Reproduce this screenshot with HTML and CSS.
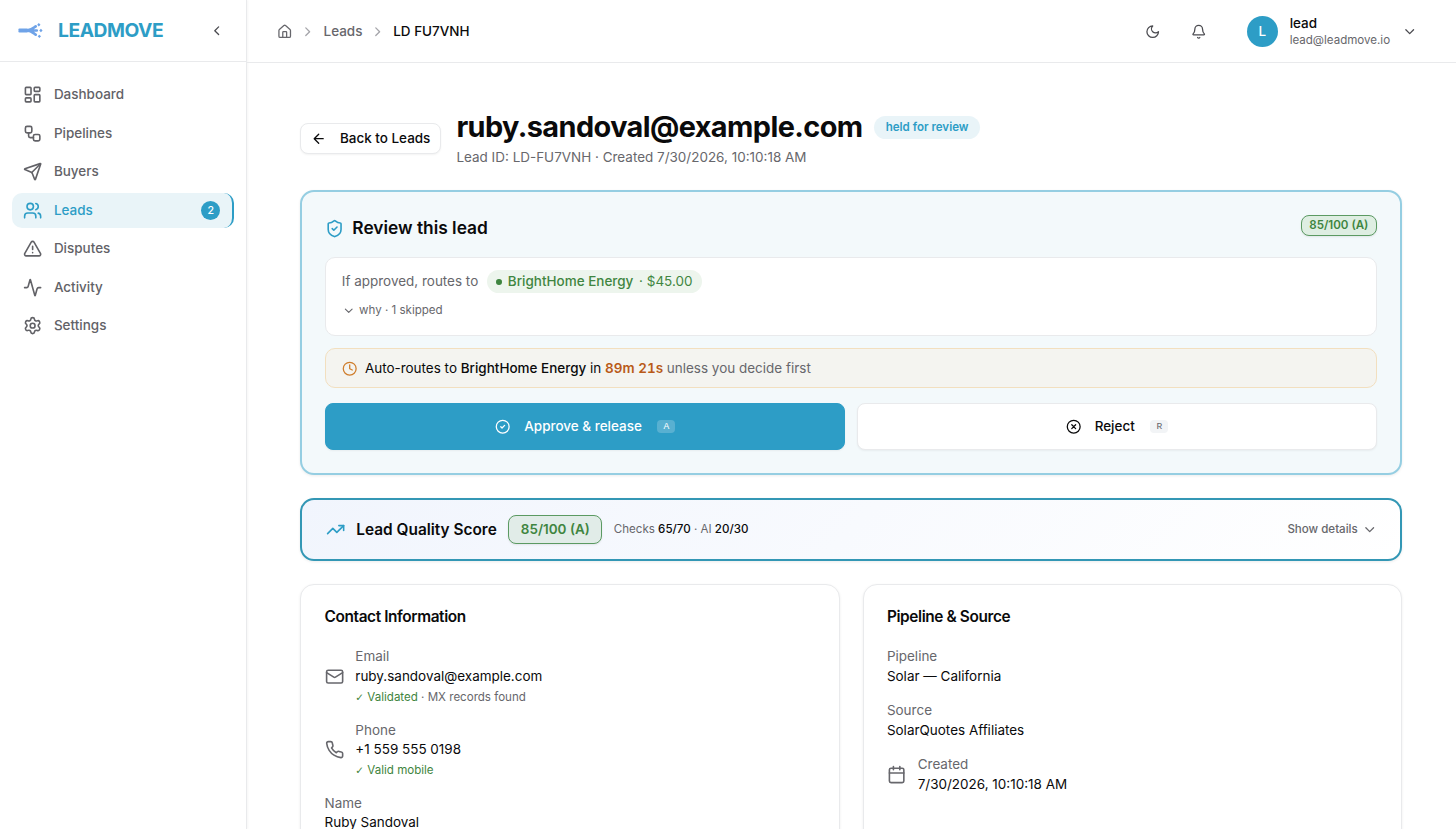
FILE: index.html
```html
<!DOCTYPE html>
<html lang="en">

<head>
  <meta charset="UTF-8" />
  <meta name="viewport" content="width=device-width, initial-scale=1.0" />
  <title>LEADMOVE - LD FU7VNH</title>
  <link rel="stylesheet" href="styles.css">
</head>

<body>
  <div class="app">
    <aside class="sidebar">
      <div class="brand">
        <svg class="logo" viewBox="0 0 24 16" fill="none" stroke="#6fa3e8" stroke-linecap="round">
          <path d="M1.500 7.300h7M1.500 8.600h7" stroke-width="2.400" />
          <path d="M8 8h10M8 8c4 0 5-1 9-4M8 8c4 0 5 1 9 4" stroke-width="2.600" />
          <path d="M20 .9l1.600 1.600-1.600 1.600-1.600-1.600zM22 6.400l1.600 1.600-1.600 1.600-1.600-1.600zM20.500 12l1.600 1.600-1.600 1.600-1.600-1.600z" fill="#6fa3e8" stroke="none" />
        </svg>
        <span class="brand-name">LEADMOVE</span>
        <svg class="icon i16 collapse" viewBox="0 0 24 24"><path d="m15 18-6-6 6-6" /></svg>
      </div>

      <nav class="nav">
        <a class="nav-item">
          <svg class="icon i20" viewBox="0 0 24 24"><rect width="7" height="9" x="3" y="3" rx="1" /><rect width="7" height="5" x="14" y="3" rx="1" /><rect width="7" height="9" x="14" y="12" rx="1" /><rect width="7" height="5" x="3" y="16" rx="1" /></svg>
          Dashboard
        </a>
        <a class="nav-item">
          <svg class="icon i20" viewBox="0 0 24 24"><rect width="8" height="8" x="3" y="3" rx="2" /><path d="M7 11v4a2 2 0 0 0 2 2h4" /><rect width="8" height="8" x="13" y="13" rx="2" /></svg>
          Pipelines
        </a>
        <a class="nav-item">
          <svg class="icon i20" viewBox="0 0 24 24"><path d="M14.536 21.686a.5.5 0 0 0 .937-.024l6.5-19a.496.496 0 0 0-.635-.635l-19 6.5a.5.5 0 0 0-.024.937l7.93 3.18a2 2 0 0 1 1.112 1.11z" /><path d="m21.854 2.147-10.94 10.939" /></svg>
          Buyers
        </a>
        <a class="nav-item active">
          <svg class="icon i20" viewBox="0 0 24 24"><path d="M16 21v-2a4 4 0 0 0-4-4H6a4 4 0 0 0-4 4v2" /><circle cx="9" cy="7" r="4" /><path d="M22 21v-2a4 4 0 0 0-3-3.87M16 3.13a4 4 0 0 1 0 7.75" /></svg>
          Leads
          <span class="count">2</span>
        </a>
        <a class="nav-item">
          <svg class="icon i20" viewBox="0 0 24 24"><path d="m21.73 18-8-14a2 2 0 0 0-3.48 0l-8 14A2 2 0 0 0 4 21h16a2 2 0 0 0 1.73-3" /><path d="M12 9v4M12 17h.01" /></svg>
          Disputes
        </a>
        <a class="nav-item">
          <svg class="icon i20" viewBox="0 0 24 24"><path d="M22 12h-2.48a2 2 0 0 0-1.93 1.46l-2.35 8.36a.25.25 0 0 1-.48 0L9.24 2.18a.25.25 0 0 0-.48 0l-2.35 8.36A2 2 0 0 1 4.49 12H2" /></svg>
          Activity
        </a>
        <a class="nav-item">
          <svg class="icon i20" viewBox="0 0 24 24"><path d="M9.671 4.136a2.34 2.34 0 0 1 4.659 0 2.34 2.34 0 0 0 3.319 1.915 2.34 2.34 0 0 1 2.33 4.033 2.34 2.34 0 0 0 0 3.831 2.34 2.34 0 0 1-2.33 4.033 2.34 2.34 0 0 0-3.319 1.915 2.34 2.34 0 0 1-4.659 0 2.34 2.34 0 0 0-3.32-1.915 2.34 2.34 0 0 1-2.33-4.033 2.34 2.34 0 0 0 0-3.831A2.34 2.34 0 0 1 6.35 6.051a2.34 2.34 0 0 0 3.319-1.915" /><circle cx="12" cy="12" r="3" /></svg>
          Settings
        </a>
      </nav>
    </aside>

    <div class="page">
      <header class="topbar">
        <div class="crumbs">
          <svg class="icon i16" viewBox="0 0 24 24"><path d="M15 21v-8a1 1 0 0 0-1-1h-4a1 1 0 0 0-1 1v8" /><path d="M3 10a2 2 0 0 1 .709-1.528l7-5.999a2 2 0 0 1 2.582 0l7 5.999A2 2 0 0 1 21 10v9a2 2 0 0 1-2 2H5a2 2 0 0 1-2-2z" /></svg>
          <svg class="icon i16 sep" viewBox="0 0 24 24"><path d="m9 18 6-6-6-6" /></svg>
          <span>Leads</span>
          <svg class="icon i16 sep" viewBox="0 0 24 24"><path d="m9 18 6-6-6-6" /></svg>
          <span class="current">LD FU7VNH</span>
        </div>
        <div class="tools">
          <svg class="icon i16" viewBox="0 0 24 24"><path d="M12 3a6 6 0 0 0 9 9 9 9 0 1 1-9-9" /></svg>
          <svg class="icon i16" viewBox="0 0 24 24"><path d="M10.268 21a2 2 0 0 0 3.464 0" /><path d="M3.262 15.326A1 1 0 0 0 4 17h16a1 1 0 0 0 .74-1.673C19.41 13.956 18 12.499 18 8A6 6 0 0 0 6 8c0 4.499-1.411 5.956-2.738 7.326" /></svg>
          <div class="user">
            <span class="avatar">L</span>
            <div>
              <div class="user-name">lead</div>
              <div class="user-mail">lead@leadmove.io</div>
            </div>
            <svg class="icon i16" viewBox="0 0 24 24"><path d="m6 9 6 6 6-6" /></svg>
          </div>
        </div>
      </header>

      <main class="content">
        <div class="heading">
          <button class="back">
            <svg class="icon i16" viewBox="0 0 24 24"><path d="m12 19-7-7 7-7M19 12H5" /></svg>
            Back to Leads
          </button>
          <div>
            <div class="title-row">
              <h1>ruby.sandoval@example.com</h1>
              <span class="status">held for review</span>
            </div>
            <p class="subtitle">Lead ID: LD-FU7VNH · Created 7/30/2026, 10:10:18 AM</p>
          </div>
        </div>

        <section class="review">
          <div class="review-head">
            <h2>
              <svg class="icon i20" viewBox="0 0 24 24"><path d="M20 13c0 5-3.500 7.500-7.660 8.950a1 1 0 0 1-.67-.01C7.500 20.500 4 18 4 13V6a1 1 0 0 1 1-1c2 0 4.500-1.200 6.240-2.720a1.170 1.170 0 0 1 1.520 0C14.510 3.810 17 5 19 5a1 1 0 0 1 1 1z" /><path d="m9 12 2 2 4-4" /></svg>
              Review this lead
            </h2>
            <span class="grade">85/100 (A)</span>
          </div>

          <div class="route">
            <div class="route-line">
              If approved, routes to
              <span class="pill"><i class="dot"></i><b>BrightHome Energy</b><span class="price">· $45.00</span></span>
            </div>
            <div class="why">
              <svg class="icon i14" viewBox="0 0 24 24"><path d="m6 9 6 6 6-6" /></svg>
              why · 1 skipped
            </div>
          </div>

          <div class="timer">
            <svg class="icon i16" viewBox="0 0 24 24"><circle cx="12" cy="12" r="10" /><path d="M12 6v6l4 2" /></svg>
            <span>Auto-routes to <b>BrightHome Energy</b> in <b class="time">89m 21s</b> <span class="muted">unless you decide first</span></span>
          </div>

          <div class="actions">
            <button class="approve">
              <svg class="icon i16" viewBox="0 0 24 24"><circle cx="12" cy="12" r="10" /><path d="m9 12 2 2 4-4" /></svg>
              Approve &amp; release
              <kbd>A</kbd>
            </button>
            <button class="reject">
              <svg class="icon i16" viewBox="0 0 24 24"><circle cx="12" cy="12" r="10" /><path d="m15 9-6 6M9 9l6 6" /></svg>
              Reject
              <kbd>R</kbd>
            </button>
          </div>
        </section>

        <section class="score">
          <svg class="icon i20 trend" viewBox="0 0 24 24"><path d="M16 7h6v6" /><path d="m22 7-8.500 8.500-5-5L2 17" /></svg>
          <h3>Lead Quality Score</h3>
          <span class="grade large">85/100 (A)</span>
          <span class="checks">Checks <b>65/70</b> · AI <b>20/30</b></span>
          <span class="details">
            Show details
            <svg class="icon i16" viewBox="0 0 24 24"><path d="m6 9 6 6 6-6" /></svg>
          </span>
        </section>

        <div class="cards">
          <section class="card">
            <h3>Contact Information</h3>
            <div class="field">
              <svg class="icon i20" viewBox="0 0 24 24"><rect width="20" height="16" x="2" y="4" rx="2" /><path d="m22 7-8.970 5.700a1.940 1.940 0 0 1-2.060 0L2 7" /></svg>
              <div>
                <div class="label">Email</div>
                <div>ruby.sandoval@example.com</div>
                <div class="note"><span class="ok"><span class="tick">✓</span> Validated</span> · MX records found</div>
              </div>
            </div>
            <div class="field">
              <svg class="icon i20" viewBox="0 0 24 24"><path d="M22 16.920v3a2 2 0 0 1-2.180 2 19.790 19.790 0 0 1-8.630-3.070 19.500 19.500 0 0 1-6-6 19.790 19.790 0 0 1-3.070-8.670A2 2 0 0 1 4.110 2h3a2 2 0 0 1 2 1.720 12.840 12.840 0 0 0 .7 2.810 2 2 0 0 1-.45 2.110L8.090 9.910a16 16 0 0 0 6 6l1.270-1.270a2 2 0 0 1 2.110-.45 12.840 12.840 0 0 0 2.810.7A2 2 0 0 1 22 16.920z" /></svg>
              <div>
                <div class="label">Phone</div>
                <div>+1 559 555 0198</div>
                <div class="note"><span class="ok"><span class="tick">✓</span> Valid mobile</span></div>
              </div>
            </div>
            <div class="field">
              <div>
                <div class="label">Name</div>
                <div>Ruby Sandoval</div>
              </div>
            </div>
          </section>

          <section class="card">
            <h3>Pipeline &amp; Source</h3>
            <div class="field">
              <div>
                <div class="label">Pipeline</div>
                <div>Solar — California</div>
              </div>
            </div>
            <div class="field">
              <div>
                <div class="label">Source</div>
                <div>SolarQuotes Affiliates</div>
              </div>
            </div>
            <div class="field">
              <svg class="icon i20" viewBox="0 0 24 24"><path d="M8 2v4M16 2v4M3 10h18" /><rect width="18" height="18" x="3" y="4" rx="2" /></svg>
              <div>
                <div class="label">Created</div>
                <div>7/30/2026, 10:10:18 AM</div>
              </div>
            </div>
          </section>
        </div>
      </main>
    </div>
  </div>
</body>

</html>
```
FILE: styles.css
```css
:root {
  --primary: #2d9dc6;
  --text: #0a0a0b;
  --muted: #67676c;
  --border: #e9eaec;
  --green: #3f8540;
}

* {
  box-sizing: border-box;
}

html {
  font-size: 15.407px;
}

body {
  margin: 0;
  height: 100vh;
  overflow: hidden;
  background-color: #fff;
  color: var(--text);
  font-family: Inter, "Liberation Sans", sans-serif;
  font-size: 0.875rem;
  line-height: 1.25rem;
}

h1,
h2,
h3,
p {
  margin: 0;
}

b {
  font-weight: 500;
}

button {
  font: inherit;
  font-weight: 500;
  color: inherit;
}

.icon {
  display: block;
  flex: none;
  fill: none;
  stroke: currentColor;
  stroke-width: 2;
  stroke-linecap: round;
  stroke-linejoin: round;
}

.i14 {
  width: 0.875rem;
  height: 0.875rem;
}

.i16 {
  width: 1rem;
  height: 1rem;
}

.i20 {
  width: 1.25rem;
  height: 1.25rem;
}

.app {
  display: flex;
  height: 100vh;
}

/* sidebar */
.sidebar {
  flex: none;
  width: 16rem;
  border-right: 1px solid var(--border);
  box-shadow: 1px 0 2px rgba(0, 0, 0, 0.04);
}

.brand {
  display: flex;
  align-items: center;
  height: 62px;
  padding: 0 1.4rem 0 1.2rem;
  border-bottom: 1px solid var(--border);
}

.logo {
  width: 25px;
  height: 17px;
  margin-right: 0.95rem;
}

.brand-name {
  color: var(--primary);
  font-size: 1.25rem;
  font-weight: 700;
  letter-spacing: -0.025em;
}

.collapse {
  margin-left: auto;
  color: #4b4b50;
}

.nav {
  display: flex;
  flex-direction: column;
  gap: 0.25rem;
  padding: 1rem 0.75rem;
}

.nav-item {
  display: flex;
  align-items: center;
  gap: 0.75rem;
  height: 2.25rem;
  padding: 0 0.75rem;
  border-radius: 10px;
  color: #626267;
  font-weight: 500;
}

.nav-item.active {
  background-color: #e9f4f8;
  color: var(--primary);
  border-right: 2px solid var(--primary);
}

.count {
  width: 1.25rem;
  height: 1.25rem;
  margin-left: auto;
  border-radius: 50%;
  background-color: var(--primary);
  color: #fff;
  font-size: 0.6875rem;
  text-align: center;
}

/* top bar */
.page {
  flex: 1;
  min-width: 0;
  overflow: hidden;
}

.topbar {
  display: flex;
  align-items: center;
  justify-content: space-between;
  height: 63px;
  padding: 1px 2.5rem 0 2rem;
  border-bottom: 1px solid var(--border);
}

.crumbs {
  display: flex;
  align-items: center;
  gap: 0.5rem;
  color: var(--muted);
  font-weight: 500;
}

.crumbs .sep {
  color: #a5a5aa;
}

.crumbs .current {
  color: var(--text);
}

.tools {
  display: flex;
  align-items: center;
  gap: 2rem;
  color: #4b4b50;
}

.user {
  display: flex;
  align-items: center;
  gap: 0.78rem;
  margin-left: 0.6rem;
}

.avatar {
  width: 2rem;
  height: 2rem;
  border-radius: 50%;
  background-color: var(--primary);
  color: #fff;
  font-weight: 500;
  line-height: 2rem;
  text-align: center;
}

.user-name {
  color: var(--text);
  font-weight: 500;
  line-height: 1.15rem;
}

.user-mail {
  color: var(--muted);
  font-size: 0.75rem;
  line-height: 1.05rem;
}

/* lead heading */
.content {
  display: flex;
  flex-direction: column;
  gap: 1.5rem;
  padding: 3.05rem 3.5rem;
}

.heading {
  display: flex;
  align-items: center;
  gap: 1rem;
}

.back {
  display: flex;
  align-items: center;
  gap: 0.875rem;
  height: 2rem;
  padding: 0 0.625rem;
  border: 1px solid var(--border);
  border-radius: 8px;
  background-color: #fff;
  box-shadow: 0 1px 2px rgba(0, 0, 0, 0.05);
}

.title-row {
  display: flex;
  align-items: center;
  gap: 0.75rem;
}

h1 {
  font-size: 1.875rem;
  font-weight: 700;
  line-height: 2.25rem;
  letter-spacing: -0.0205em;
}

.status {
  padding: 0.25rem 0.75rem;
  border-radius: 12px;
  background-color: #e9f4f8;
  color: var(--primary);
  font-size: 0.75rem;
  font-weight: 600;
  line-height: 1rem;
}

.subtitle {
  margin-top: 0.2rem;
  color: var(--muted);
}

/* review panel */
.review {
  padding: 1.5rem 1.49rem;
  border: 2px solid #95cee2;
  border-radius: 14px;
  background-color: #f3f9fb;
  box-shadow: 0 1px 3px rgba(0, 0, 0, 0.08);
}

.review-head {
  display: flex;
  align-items: flex-start;
  justify-content: space-between;
  margin-bottom: 0.96rem;
}

h2 {
  display: flex;
  align-items: center;
  gap: 0.5rem;
  font-size: 1.125rem;
  font-weight: 600;
  line-height: 1.75rem;
}

h2 .icon,
.trend {
  color: var(--primary);
}

.grade {
  padding: 0.125rem 0.5rem;
  border: 1px solid #5b9a62;
  border-radius: 8px;
  background-color: #deeee2;
  color: var(--green);
  font-size: 0.75rem;
  font-weight: 600;
  line-height: 1rem;
  box-shadow: 0 1px 2px rgba(0, 0, 0, 0.08);
}

.grade.large {
  padding: 0.25rem 0.75rem;
  font-size: 0.875rem;
  line-height: 1.25rem;
  background-color: #e1ece8;
}

.route {
  margin-bottom: 0.75rem;
  padding: 0.79rem 1rem 0.71rem;
  border: 1px solid var(--border);
  border-radius: 10px;
  background-color: #fff;
  color: var(--muted);
}

.route-line {
  display: flex;
  align-items: center;
  gap: 0.55rem;
}

.pill {
  display: flex;
  align-items: center;
  gap: 0.375rem;
  height: 1.5rem;
  padding: 0 0.625rem;
  border-radius: 1rem;
  background-color: #edf5ed;
  color: var(--green);
}

.dot {
  width: 0.375rem;
  height: 0.375rem;
  border-radius: 50%;
  background-color: currentColor;
}

.why {
  display: flex;
  align-items: center;
  gap: 0.25rem;
  height: 1.75rem;
  margin-top: 0.25rem;
  font-size: 0.75rem;
}

.timer {
  display: flex;
  align-items: center;
  gap: 0.5rem;
  margin-bottom: 1rem;
  padding: 0.66rem 1rem 0.59rem;
  border: 1px solid #f2dfbf;
  border-radius: 10px;
  background-color: #f4f4f0;
}

.timer .icon {
  color: #cf7d2c;
}

.time {
  color: #b95a18;
  font-weight: 600;
  font-variant-numeric: tabular-nums;
}

.muted {
  color: var(--muted);
}

.actions {
  display: grid;
  grid-template-columns: 1fr 1fr;
  gap: 0.75rem;
}

.actions button {
  display: flex;
  align-items: center;
  justify-content: center;
  gap: 0.875rem;
  height: 3rem;
  border: 1px solid var(--border);
  border-radius: 8px;
  background-color: #fff;
  box-shadow: 0 1px 2px rgba(0, 0, 0, 0.05);
}

.actions .approve {
  border-color: var(--primary);
  background-color: var(--primary);
  color: #fff;
}

kbd {
  margin-left: 2px;
  padding: 0 0.4rem;
  border-radius: 4px;
  background-color: #f2f4f6;
  color: #65656b;
  font-family: "Liberation Mono", monospace;
  font-size: 0.625rem;
  line-height: 0.9rem;
}

.approve kbd {
  background-color: #58b0d1;
  color: #fff;
}

/* score */
.score {
  display: flex;
  align-items: center;
  gap: 0.75rem;
  height: 63px;
  padding: 0 1.5rem;
  border: 2px solid #3397b5;
  border-radius: 14px;
  background: linear-gradient(135deg, #f1f5fd, #fff);
  box-shadow: 0 1px 3px rgba(0, 0, 0, 0.08);
}

h3 {
  font-size: 1rem;
  font-weight: 600;
}

.checks {
  color: var(--muted);
  font-size: 0.75rem;
}

.checks b {
  color: var(--text);
}

.details {
  display: flex;
  align-items: center;
  gap: 0.25rem;
  margin-left: auto;
  color: var(--muted);
  font-size: 0.75rem;
  font-weight: 500;
}

/* bottom cards */
.cards {
  display: grid;
  grid-template-columns: 1fr 1fr;
  gap: 1.5rem;
}

.card {
  display: flex;
  flex-direction: column;
  gap: 1rem;
  height: 20rem;
  padding: 1.55rem 1.5rem;
  border: 1px solid var(--border);
  border-radius: 14px;
  background-color: #fff;
  box-shadow: 0 1px 3px rgba(0, 0, 0, 0.07);
}

.card h3 {
  margin-bottom: 0.5rem;
  line-height: 1rem;
  letter-spacing: -0.025em;
}

.field {
  display: flex;
  align-items: center;
  gap: 0.75rem;
}

.field .icon,
.label {
  color: var(--muted);
}

.note {
  margin-top: 0.25rem;
  color: var(--muted);
  font-size: 0.75rem;
  line-height: 1rem;
}

.ok {
  color: var(--green);
}

.tick {
  font-family: "DejaVu Sans", sans-serif;
  font-size: 0.68rem;
  font-weight: 700;
  line-height: 0.75rem;
}
```
